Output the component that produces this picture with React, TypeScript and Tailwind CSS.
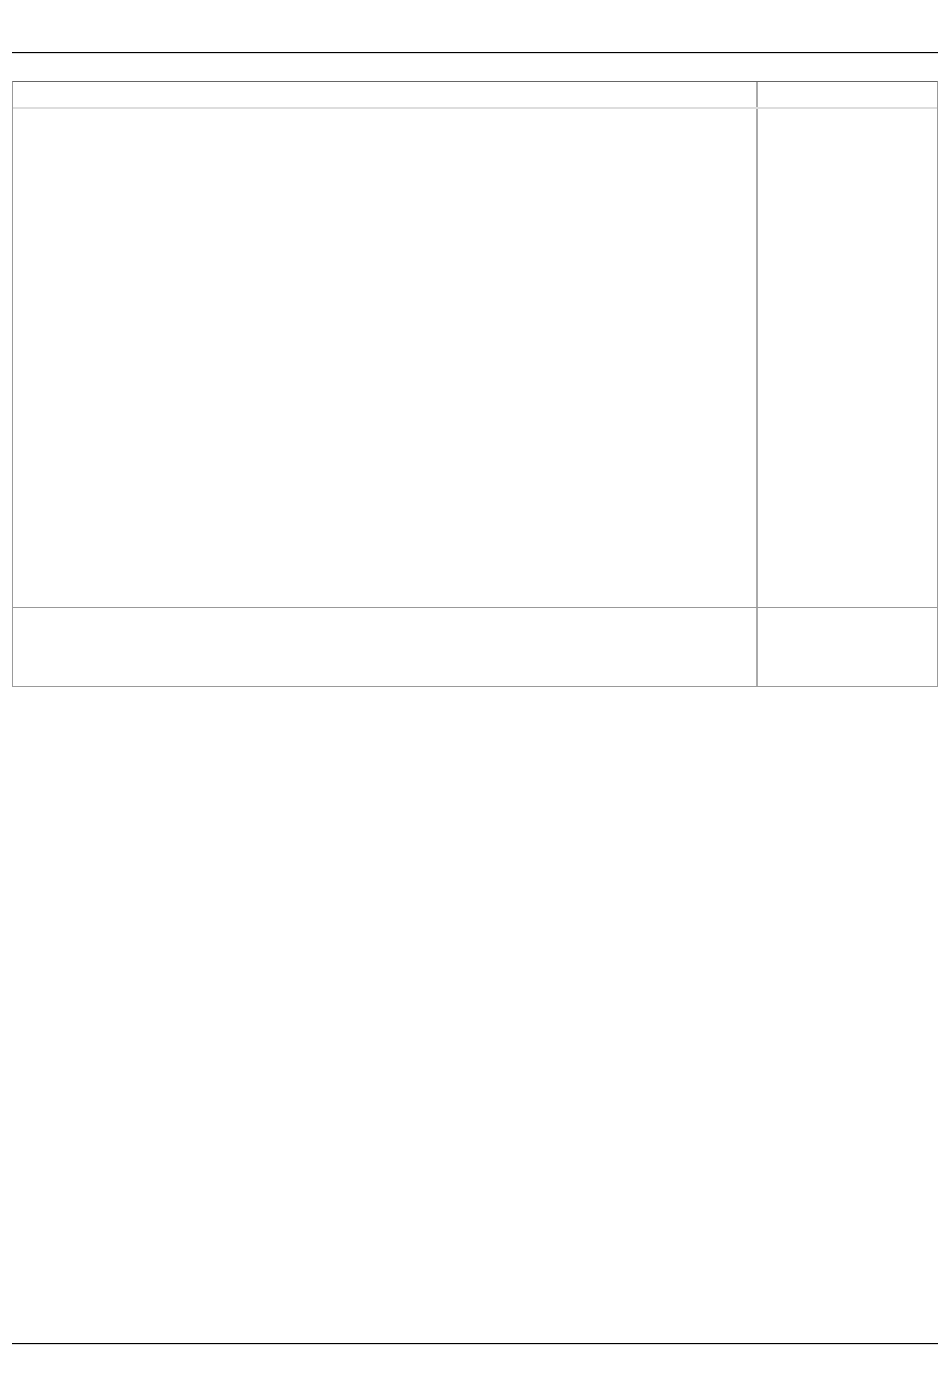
const App = () => {
  return (
    <div className="min-h-[1398px] w-full bg-white font-['Liberation_Sans',sans-serif]">
      <div className="px-3 pt-[52px]">
        <div className="h-[2px] border-t border-black bg-[#d9d9d9]" />

        <div className="mt-[27px] border border-[#9a9a9a] border-t-[#666666]">
          <div className="grid grid-cols-[745px_1fr] border-b-2 border-[#dddddd]">
            <div className="h-[25px] border-r-2 border-[#aaaaaa]" />
            <div className="h-[25px]" />
          </div>
          <div className="grid grid-cols-[745px_1fr] border-b border-[#999999]">
            <div className="h-[498px] border-r-2 border-[#aaaaaa]" />
            <div className="h-[498px]" />
          </div>
          <div className="grid grid-cols-[745px_1fr]">
            <div className="h-[78px] border-r-2 border-[#aaaaaa]" />
            <div className="h-[78px]" />
          </div>
        </div>

        <div className="mt-[656px] h-[2px] border-t border-black bg-[#d9d9d9]" />
      </div>
    </div>
  );
};

export default App;
